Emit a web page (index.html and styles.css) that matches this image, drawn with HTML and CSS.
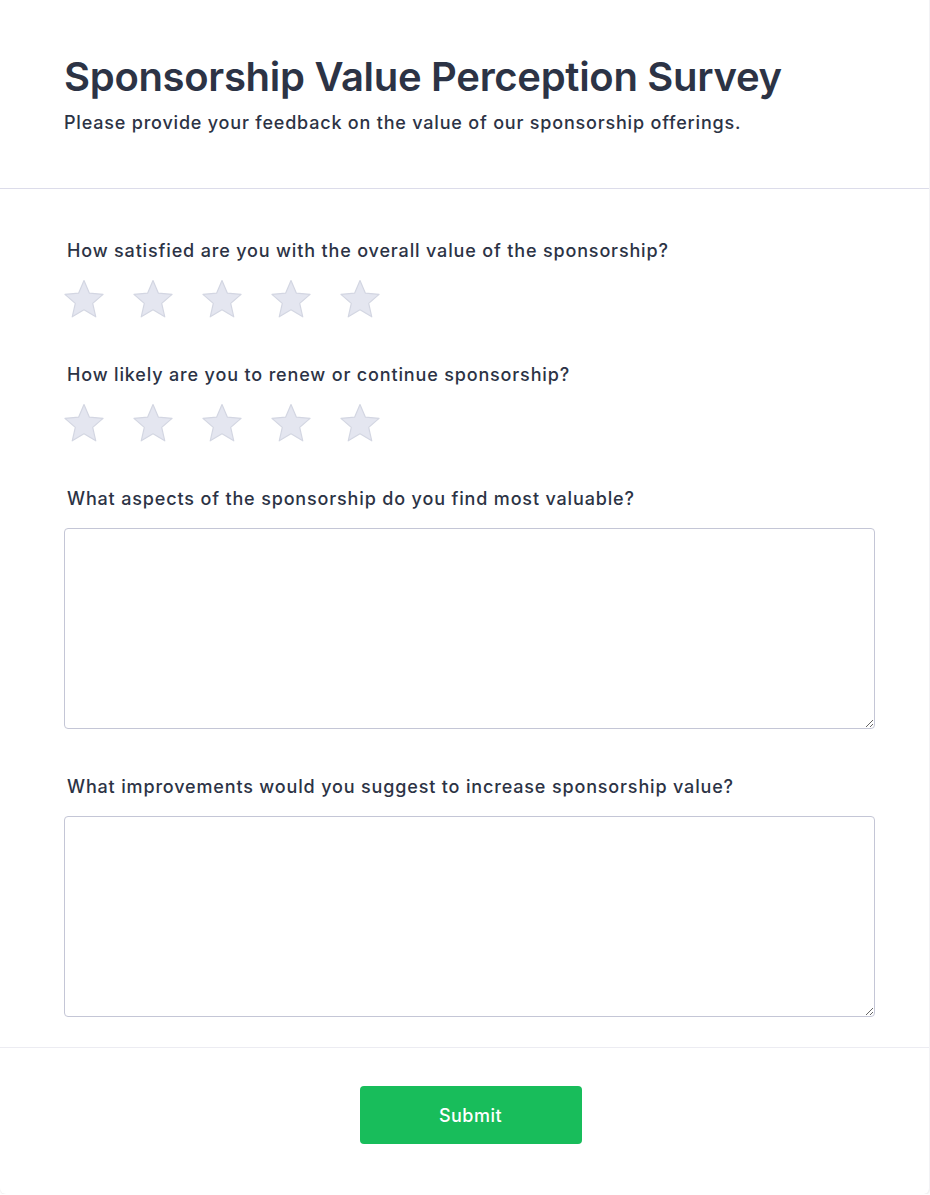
FILE: index.html
```html
<!DOCTYPE html>
<html lang="en">
<head>
<meta charset="utf-8">
<title>Sponsorship Value Perception Survey</title>
<link rel="stylesheet" href="styles.css">
</head>
<body>
<div class="card">
  <header class="header">
    <h1 class="title">Sponsorship Value Perception Survey</h1>
    <p class="subtitle">Please provide your feedback on the value of our sponsorship offerings.</p>
  </header>
  <main class="body">
    <div class="question">
      <label class="label">How satisfied are you with the overall value of the sponsorship?</label>
      <div class="stars">
        <svg class="star" viewBox="3 3 34 34"><path d="M20 3.5 L24.6 14.2 L36.2 15.2 L27.4 22.9 L30 34.3 L20 28.3 L10 34.3 L12.6 22.9 L3.8 15.2 L15.4 14.2 Z"/></svg>
        <svg class="star" viewBox="3 3 34 34"><path d="M20 3.5 L24.6 14.2 L36.2 15.2 L27.4 22.9 L30 34.3 L20 28.3 L10 34.3 L12.6 22.9 L3.8 15.2 L15.4 14.2 Z"/></svg>
        <svg class="star" viewBox="3 3 34 34"><path d="M20 3.5 L24.6 14.2 L36.2 15.2 L27.4 22.9 L30 34.3 L20 28.3 L10 34.3 L12.6 22.9 L3.8 15.2 L15.4 14.2 Z"/></svg>
        <svg class="star" viewBox="3 3 34 34"><path d="M20 3.5 L24.6 14.2 L36.2 15.2 L27.4 22.9 L30 34.3 L20 28.3 L10 34.3 L12.6 22.9 L3.8 15.2 L15.4 14.2 Z"/></svg>
        <svg class="star" viewBox="3 3 34 34"><path d="M20 3.5 L24.6 14.2 L36.2 15.2 L27.4 22.9 L30 34.3 L20 28.3 L10 34.3 L12.6 22.9 L3.8 15.2 L15.4 14.2 Z"/></svg>
      </div>
    </div>
    <div class="question">
      <label class="label">How likely are you to renew or continue sponsorship?</label>
      <div class="stars">
        <svg class="star" viewBox="3 3 34 34"><path d="M20 3.5 L24.6 14.2 L36.2 15.2 L27.4 22.9 L30 34.3 L20 28.3 L10 34.3 L12.6 22.9 L3.8 15.2 L15.4 14.2 Z"/></svg>
        <svg class="star" viewBox="3 3 34 34"><path d="M20 3.5 L24.6 14.2 L36.2 15.2 L27.4 22.9 L30 34.3 L20 28.3 L10 34.3 L12.6 22.9 L3.8 15.2 L15.4 14.2 Z"/></svg>
        <svg class="star" viewBox="3 3 34 34"><path d="M20 3.5 L24.6 14.2 L36.2 15.2 L27.4 22.9 L30 34.3 L20 28.3 L10 34.3 L12.6 22.9 L3.8 15.2 L15.4 14.2 Z"/></svg>
        <svg class="star" viewBox="3 3 34 34"><path d="M20 3.5 L24.6 14.2 L36.2 15.2 L27.4 22.9 L30 34.3 L20 28.3 L10 34.3 L12.6 22.9 L3.8 15.2 L15.4 14.2 Z"/></svg>
        <svg class="star" viewBox="3 3 34 34"><path d="M20 3.5 L24.6 14.2 L36.2 15.2 L27.4 22.9 L30 34.3 L20 28.3 L10 34.3 L12.6 22.9 L3.8 15.2 L15.4 14.2 Z"/></svg>
      </div>
    </div>
    <div class="question">
      <label class="label">What aspects of the sponsorship do you find most valuable?</label>
      <textarea class="textarea"></textarea>
    </div>
    <div class="question">
      <label class="label">What improvements would you suggest to increase sponsorship value?</label>
      <textarea class="textarea"></textarea>
    </div>
  </main>
  <footer class="footer">
    <button class="submit" type="button">Submit</button>
  </footer>
</div>
</body>
</html>
```
FILE: styles.css
```css
html, body {
  margin: 0;
  padding: 0;
  background: #ffffff;
}
body {
  font-family: Inter, "Noto Sans", sans-serif;
  color: #2d3344;
}
.card {
  width: 930px;
  height: 1194px;
  box-sizing: border-box;
  background: #ffffff;
  border-radius: 0 0 6px 6px;
  box-shadow: 0 1px 2px rgba(0,0,0,0.08);
  border-right: 1px solid #f2f2f5;
  display: flex;
  flex-direction: column;
}
.header {
  padding: 51px 64px 0;
  height: 189px;
  box-sizing: border-box;
  border-bottom: 1px solid #dcdcea;
}
.title {
  margin: 0;
  font-size: 40px;
  line-height: 52px;
  font-weight: 600;
  color: #2c3345;
  letter-spacing: -0.3px;
}
.subtitle {
  margin: 6px 0 0;
  font-size: 18px;
  line-height: 28px;
  font-weight: 500;
  color: #2c3345;
  letter-spacing: 0.8px;
}
.body {
  flex: none;
  height: 859px;
  box-sizing: border-box;
  padding: 49px 54px 0 64px;
  border-bottom: 1px solid #ececf2;
}
.question {
  display: flex;
  flex-direction: column;
}
.label {
  font-size: 18px;
  line-height: 26px;
  font-weight: 500;
  color: #2c3345;
  padding-left: 3px;
  letter-spacing: 0.84px;
}
.stars {
  display: flex;
  gap: 29px;
  margin-top: 16px;
  margin-bottom: 42px;
}
.star {
  width: 40px;
  height: 40px;
}
.star path {
  fill: #e4e6f0;
  stroke: #d3d6e2;
  stroke-width: 1;
  stroke-linejoin: round;
}
.textarea {
  margin-top: 16px;
  height: 201px;
  box-sizing: border-box;
  border: 1px solid #c4c6d6;
  border-radius: 4px;
  resize: vertical;
  font-family: inherit;
  margin-bottom: 45px;
}
.question:last-child .textarea {
  margin-bottom: 0;
}
.footer {
  flex: 1;
  box-sizing: border-box;
  display: flex;
  justify-content: center;
  align-items: flex-start;
  padding-top: 38px;
  padding-left: 12px;
}
.submit {
  width: 222px;
  height: 58px;
  border: none;
  border-radius: 4px;
  background: #18bd5b;
  color: #ffffff;
  font-family: inherit;
  font-size: 18px;
  font-weight: 500;
  letter-spacing: 0.5px;
}
```
